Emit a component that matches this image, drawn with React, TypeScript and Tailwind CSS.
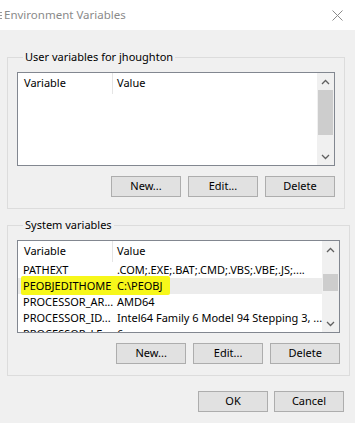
import React from 'react';

// Windows "Environment Variables" dialog, drawn flat

type Row = { name: string; value: string; selected?: boolean; marked?: boolean };

const systemRows: Row[] = [
  { name: 'PATHEXT', value: '.COM;.EXE;.BAT;.CMD;.VBS;.VBE;.JS;....' },
  { name: 'PEOBJEDITHOME', value: 'C:\\PEOBJ', selected: true, marked: true },
  { name: 'PROCESSOR_AR...', value: 'AMD64' },
  { name: 'PROCESSOR_ID...', value: 'Intel64 Family 6 Model 94 Stepping 3, ...' },
  { name: 'PROCESSOR_LE...', value: '6' },
];

const Chevron = ({ up }: { up?: boolean }) => (
  <svg width="9" height="6" viewBox="0 0 9 6" className="block">
    <path
      d={up ? 'M1 5 L4.5 1.5 L8 5' : 'M1 1 L4.5 4.5 L8 1'}
      fill="none"
      stroke="#606060"
      strokeWidth="1.3"
    />
  </svg>
);

const ScrollBar = ({ thumbTop, thumbHeight }: { thumbTop: number; thumbHeight: number }) => (
  <div className="w-[17px] shrink-0 bg-[#f0f0f0] flex flex-col">
    <div className="h-[17px] flex items-center justify-center">
      <Chevron up />
    </div>
    <div className="flex-1 relative">
      <div
        className="absolute left-[1px] right-[1px] bg-[#cdcdcd]"
        style={{ top: thumbTop, height: thumbHeight }}
      />
    </div>
    <div className="h-[17px] flex items-center justify-center">
      <Chevron />
    </div>
  </div>
);

const Header = () => (
  <div className="h-[21px] flex items-center shrink-0">
    <div className="w-[95px] h-full pl-[6px] flex items-center border-r border-[#e5e5e5]">Variable</div>
    <div className="pl-[4px]">Value</div>
  </div>
);

const Btn = ({ children }: { children: React.ReactNode }) => (
  <button className="w-[70px] h-[21px] bg-[#e1e1e1] border border-[#adadad] text-[11px] text-black flex items-center justify-center">
    {children}
  </button>
);

const ButtonRow = () => (
  <div className="flex justify-end gap-[7px]">
    <Btn>New...</Btn>
    <Btn>Edit...</Btn>
    <Btn>Delete</Btn>
  </div>
);

export default function App() {
  return (
    <div
      className="w-[355px] h-[423px] bg-[#f0f0f0] flex flex-col text-[11px] text-black overflow-hidden"
      style={{ fontFamily: '"Noto Sans", "Liberation Sans", sans-serif' }}
    >
      {/* title bar */}
      <div className="h-[30px] bg-white flex items-center justify-between shrink-0">
        <div className="flex items-center">
          <div className="w-[2px] flex flex-col gap-[2px] mr-[2px]">
            <div className="h-[1px] bg-[#9a9a9a]" />
            <div className="h-[1px] bg-[#9a9a9a]" />
            <div className="h-[1px] bg-[#9a9a9a]" />
          </div>
          <span className="text-[11.5px] text-[#8a8a8a]">Environment Variables</span>
        </div>
        <svg width="11" height="11" viewBox="0 0 11 11" className="mr-[12px]">
          <path d="M0.5 0.5 L10.5 10.5 M10.5 0.5 L0.5 10.5" stroke="#8a8a8a" strokeWidth="1" />
        </svg>
      </div>

      <div className="pl-[7px] pr-[10px] pt-[19px] flex flex-col">
        {/* user variables */}
        <fieldset className="border border-[#dcdcdc] px-[9px] pb-[11px]">
          <legend className="ml-[6px] px-[2px] leading-[16px]">User variables for jhoughton</legend>
          <div className="mt-[7px] h-[94px] border border-[#828790] bg-white flex">
            <div className="flex-1 flex flex-col">
              <Header />
            </div>
            <ScrollBar thumbTop={0} thumbHeight={45} />
          </div>
          <div className="mt-[10px]">
            <ButtonRow />
          </div>
        </fieldset>

        {/* system variables */}
        <fieldset className="mt-[8px] border border-[#dcdcdc] px-[9px] pb-[11px]">
          <legend className="ml-[6px] px-[2px] leading-[16px]">System variables</legend>
          <div className="mt-[7px] h-[93px] border border-[#828790] bg-white flex overflow-hidden">
            <div className="flex-1 flex flex-col overflow-hidden">
              <Header />
              {systemRows.map((r) => (
                <div
                  key={r.name}
                  className={`relative h-[16px] shrink-0 flex items-center whitespace-nowrap ${r.selected ? 'bg-[#ececec]' : ''}`}
                >
                  {r.marked && (
                    <div className="absolute left-[3px] top-[-2px] w-[149px] h-[19px] bg-[#f7f71a] rounded-[2px]" />
                  )}
                  <div className="relative w-[95px] pl-[5px]">{r.name}</div>
                  <div className="relative pl-[4px]">{r.value}</div>
                </div>
              ))}
            </div>
            <ScrollBar thumbTop={16} thumbHeight={17} />
          </div>
          <div className="mt-[10px]">
            <ButtonRow />
          </div>
        </fieldset>

        <div className="mt-[15px] flex justify-end gap-[6px] pr-[1px]">
          <Btn>OK</Btn>
          <Btn>Cancel</Btn>
        </div>
      </div>
    </div>
  );
}
